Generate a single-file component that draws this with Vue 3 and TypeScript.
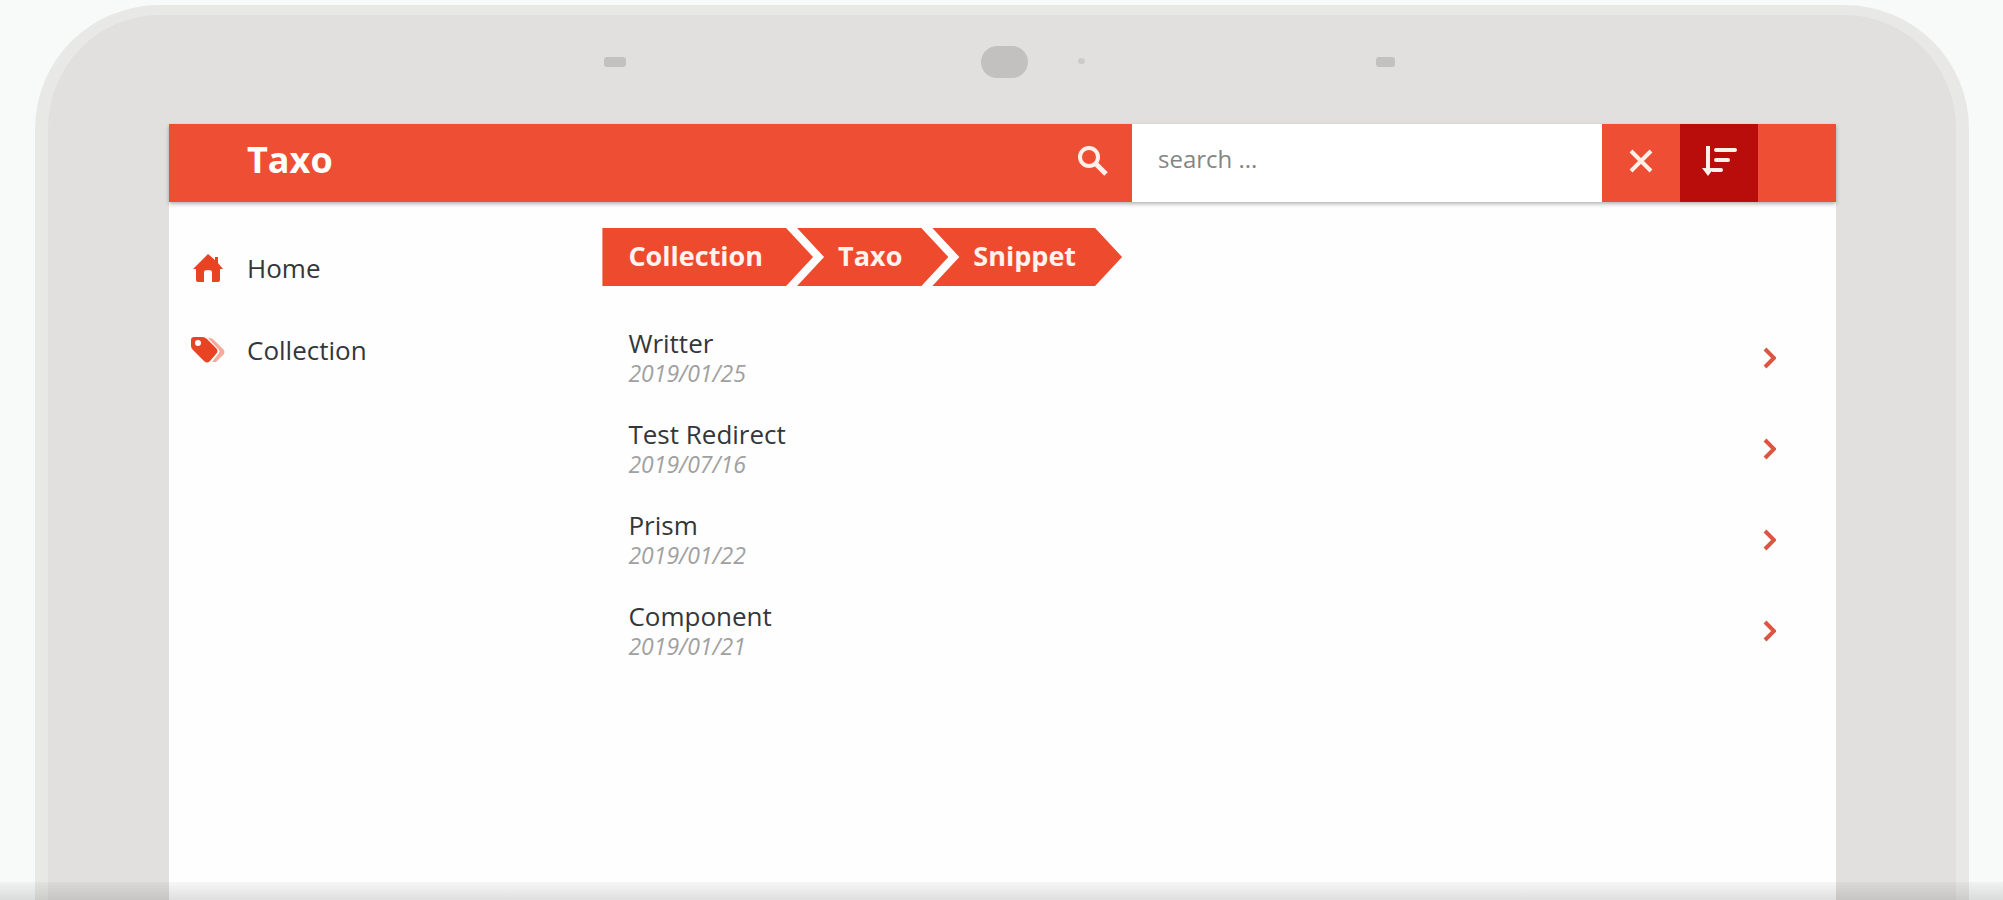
<script setup lang="ts">
import { ref } from 'vue'

interface Entry {
  title: string
  date: string
}

const query = ref<string>('')
const trail: string[] = ['Collection', 'Taxo', 'Snippet']
const entries: Entry[] = [
  { title: 'Writter', date: '2019/01/25' },
  { title: 'Test Redirect', date: '2019/07/16' },
  { title: 'Prism', date: '2019/01/22' },
  { title: 'Component', date: '2019/01/21' },
]
</script>

<template>
  <div class="stage">
    <div class="device">
      <div class="sensors" aria-hidden="true">
        <span class="mic"></span>
        <span class="camera"></span>
        <span class="led"></span>
        <span class="mic mic-right"></span>
      </div>
      <div class="screen">
        <header class="bar">
          <h1 class="brand">Taxo</h1>
          <form class="search" role="search" @submit.prevent>
            <button class="tool" type="submit" aria-label="Search">
              <svg width="34" height="34" viewBox="0 0 34 34" fill="none" stroke="currentColor">
                <circle cx="13" cy="13" r="9" stroke-width="4" />
                <path d="M19 19L30 30" stroke-width="5" />
              </svg>
            </button>
            <input v-model="query" class="field" type="text" placeholder="search ..." aria-label="Search" />
            <button class="tool" type="button" aria-label="Clear" @click="query = ''">
              <svg width="28" height="28" viewBox="0 0 28 28" fill="none" stroke="currentColor" stroke-width="4">
                <path d="M4 4L24 24M24 4L4 24" />
              </svg>
            </button>
          </form>
          <button class="tool sort" type="button" aria-label="Sort">
            <svg width="36" height="32" viewBox="0 0 36 32" fill="none" stroke="currentColor">
              <path d="M7 1V27" stroke-width="4" />
              <path d="M1 23H13L7 31Z" fill="currentColor" stroke="none" />
              <path d="M15 5H34M15 15H27M12 25H20" stroke-width="4" stroke-linecap="round" />
            </svg>
          </button>
          <span class="spare"></span>
        </header>
        <div class="body">
          <nav class="side">
            <a class="link" href="#home">
              <span class="glyph">
                <svg width="30" height="28" viewBox="0 0 30 28" fill="currentColor">
                  <path d="M15 0L22 6V3H25V9L30 15H27V26Q27 28 25 28H19V18Q19 16 15 16Q11 16 11 18V28H5Q3 28 3 26V15H0Z" />
                </svg>
              </span>
              Home
            </a>
            <a class="link" href="#collection">
              <span class="glyph">
                <svg width="34" height="28" viewBox="0 0 34 28">
                  <path d="M17 2H19Q21 2 23 4L33 14Q34 16 33 18L25 26H21L28 17Q29 15 28 14Z" fill="#f5aa9c" />
                  <path fill-rule="evenodd" d="M3 1H11Q14 1 16 3L25 12Q28 15 25 18L19 25Q16 28 13 25L2 14Q0 12 0 10V4Q0 1 3 1ZM7 4A3 3 0 1 0 7 10A3 3 0 1 0 7 4Z" fill="#e84424" />
                </svg>
              </span>
              Collection
            </a>
          </nav>
          <main class="content">
            <nav class="trail" aria-label="Breadcrumb">
              <a v-for="name in trail" :key="name" class="crumb" href="#">{{ name }}</a>
            </nav>
            <ul class="list">
              <li v-for="entry in entries" :key="entry.title">
                <a class="entry" href="#">
                  <span>
                    <span class="title">{{ entry.title }}</span>
                    <time class="date">{{ entry.date }}</time>
                  </span>
                  <svg class="arrow" width="14" height="22" viewBox="0 0 14 22" fill="none" stroke="currentColor" stroke-width="4">
                    <path d="M3 2L12 11L3 20" />
                  </svg>
                </a>
              </li>
            </ul>
          </main>
        </div>
      </div>
    </div>
    <div class="fade"></div>
  </div>
</template>

<style>
body {
  margin: 0;
}
</style>

<style scoped>
* {
  box-sizing: border-box;
}

.stage {
  position: relative;
  display: flex;
  height: 100vh;
  padding: 5px 34px 0 35px;
  overflow: hidden;
  background: #f8faf9;
  font-family: "Open Sans", "Noto Sans", sans-serif;
  color: #33373a;
}

.device {
  flex: 1;
  display: flex;
  flex-direction: column;
  padding: 0 120px 0 121px;
  background: #e1e0de;
  border: 13px solid #e8e8e6;
  border-top-width: 10px;
  border-bottom: 0;
  border-radius: 124px 124px 0 0;
}

.sensors {
  position: relative;
  height: 109px;
}

.sensors span {
  position: absolute;
  background: #c2c1c0;
}

.sensors .mic {
  left: 26.1%;
  top: 42px;
  width: 22px;
  height: 10px;
  border-radius: 3px;
}

.sensors .mic-right {
  left: 72.4%;
  width: 19px;
}

.sensors .camera {
  left: 48.7%;
  top: 31px;
  width: 47px;
  height: 32px;
  border-radius: 16px;
}

.sensors .led {
  left: 54.5%;
  top: 43px;
  width: 7px;
  height: 6px;
  border-radius: 3px;
  background: #cccbca;
}

.screen {
  flex: 1;
  background: #fefefe;
}

.bar {
  display: flex;
  height: 78px;
  background: #ee4e34;
  box-shadow: 0 2px 4px rgba(0, 0, 0, 0.3);
}

.brand {
  flex: 1;
  margin: 0;
  padding-left: 78px;
  color: #fff;
  font-size: 36px;
  line-height: 72px;
  font-weight: 700;
}

.search {
  display: flex;
  flex: 0 0 626px;
}

.tool {
  display: flex;
  flex: 0 0 78px;
  align-items: center;
  justify-content: center;
  padding: 0 0 4px;
  border: 0;
  background: transparent;
  color: #fff0ea;
}

.sort {
  background: #b80d0b;
}

.spare {
  flex: 0 0 78px;
}

.field {
  flex: 1;
  min-width: 0;
  padding: 0 26px 10px;
  border: 0;
  border-radius: 0;
  outline: 0;
  background: #fff;
  color: #33373a;
  font: inherit;
  font-size: 24px;
}

.field::placeholder {
  color: #858585;
  opacity: 1;
}

.body {
  display: flex;
}

.side {
  flex: 0 0 26%;
  padding-top: 25px;
}

.link {
  display: flex;
  align-items: center;
  height: 82px;
  color: inherit;
  font-size: 26px;
  text-decoration: none;
}

.glyph {
  display: flex;
  flex: 0 0 78px;
  justify-content: center;
  color: #e84424;
}

.content {
  flex: 1;
  padding: 26px 60px 0 0;
}

.trail {
  display: flex;
}

.crumb {
  height: 58px;
  margin-right: -16px;
  padding: 0 46px 0 41px;
  background: #ee4a2e;
  clip-path: polygon(0 0, calc(100% - 27px) 0, 100% 50%, calc(100% - 27px) 100%, 0 100%, 27px 50%);
  color: #fff3ee;
  font-size: 27px;
  line-height: 56px;
  font-weight: 700;
  text-decoration: none;
}

.crumb:first-child {
  padding: 0 50px 0 26px;
  clip-path: polygon(0 0, calc(100% - 27px) 0, 100% 50%, calc(100% - 27px) 100%, 0 100%);
}

.list {
  margin: 0;
  padding: 26px 0 0;
  list-style: none;
}

.entry {
  display: flex;
  align-items: center;
  justify-content: space-between;
  height: 91px;
  padding-left: 26px;
  color: inherit;
  text-decoration: none;
}

.title,
.date {
  display: block;
  line-height: 30px;
}

.title {
  font-size: 26px;
}

.date {
  color: #a0a0a0;
  font-size: 23px;
  font-style: italic;
}

.arrow {
  color: #dc5540;
}

.fade {
  position: absolute;
  right: 0;
  bottom: 0;
  left: 0;
  height: 18px;
  background: linear-gradient(rgba(0, 0, 0, 0.03), rgba(0, 0, 0, 0.12));
}
</style>
